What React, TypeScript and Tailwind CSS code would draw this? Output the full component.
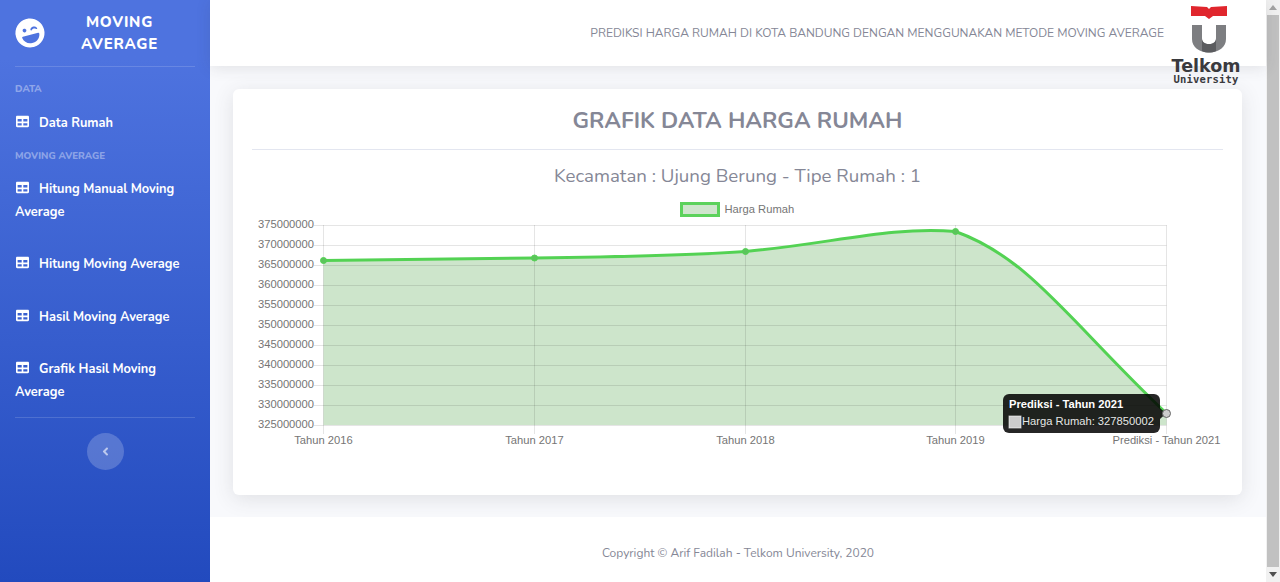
import React from 'react';
import { FaLaughWink, FaTable, FaAngleLeft } from 'react-icons/fa';

const sans = "font-['Nunito','Lato','Noto_Sans',sans-serif]";

const yTicks = [375, 370, 365, 360, 355, 350, 345, 340, 335, 330, 325];
const xTicks = [
  { x: 323.5, label: 'Tahun 2016' },
  { x: 534.5, label: 'Tahun 2017' },
  { x: 745.5, label: 'Tahun 2018' },
  { x: 955.5, label: 'Tahun 2019' },
  { x: 1166.5, label: 'Prediksi - Tahun 2021' },
];
const curve = 'M323.5 260.5 C 400 259.5, 470 259, 534.5 258 C 610 257, 680 256, 745.5 251.5 C 830 244, 890 226, 955.5 231.5 C 1030 258, 1070 322, 1166.5 413.5';

function MenuIcon() {
  return <FaTable size={13} className="inline-block ml-[1px] mr-[10px] align-[-1px]" />;
}

function TelkomMark() {
  return (
    <svg width="36" height="47" viewBox="0 0 36 47" className="block ml-[5px]">
      <path fill="#e0262d" d="M0 0 L16 1 L18 3 L20 1 L36 0 L36 10 L22 10 L18 13 L14 10 L0 10 Z" />
      <path fill="#7d7e81" d="M1 19 H11 V32 C11 36 14 38 18 38 C22 38 25 36 25 32 V19 H35 V33 C35 41 28 46.5 18 46.5 C8 46.5 1 41 1 33 Z" />
      <path fill="#5b5c5f" d="M11 33 C11 36 14 38 18 38 C22 38 25 36 25 33 L25 45 C21 47 15 47 11 45 Z" />
    </svg>
  );
}

function Chart() {
  return (
    <svg width="1009" height="300" viewBox="233 195 1009 300" className="block">
      <g fontFamily="Liberation Sans, sans-serif" fontSize="11.2" fill="#757575">
        {/* legend */}
        <rect x="681.5" y="203.5" width="37" height="12" fill="#cfe5cd" stroke="#5cd25c" strokeWidth="3" />
        <text x="724.5" y="213">Harga Rumah</text>

        {/* area first so the grid shows through */}
        <path d={`${curve} L1166.5 425 L323.5 425 Z`} fill="#cde5cb" />

        {yTicks.map((t, i) => {
          const y = 225.5 + i * 20;
          return (
            <g key={t}>
              <line x1="314" x2="1166.5" y1={y} y2={y} stroke="#000" strokeOpacity="0.1" />
              <text x="314" y={y + 2.5} textAnchor="end">{t}000000</text>
            </g>
          );
        })}
        {xTicks.map(t => (
          <g key={t.label}>
            <line x1={t.x} x2={t.x} y1="225" y2="434" stroke="#000" strokeOpacity="0.1" />
            <text x={t.x} y="444" textAnchor="middle">{t.label}</text>
          </g>
        ))}

        <path d={curve} fill="none" stroke="#53d253" strokeWidth="3" />
        {xTicks.slice(0, 4).map((t, i) => (
          <circle key={t.label} cx={t.x} cy={[260.5, 258, 251.5, 231.5][i]} r="3" fill="#5cc45c" stroke="#53d253" />
        ))}

        {/* tooltip */}
        <path d="M1003 400a6 6 0 0 1 6-6h145a6 6 0 0 1 6 6v27a6 6 0 0 1-6 6h-145a6 6 0 0 1-6-6z" fill="#000" fillOpacity="0.85" />
        <path d="M1160 408 l6 5.5 l-6 5.5 z" fill="#000" fillOpacity="0.85" />
        <circle cx="1166.5" cy="413.5" r="4" fill="#ccc" stroke="#666" strokeWidth="1" />
        <text x="1009" y="408" fill="#fff" fontWeight="700">Prediksi - Tahun 2021</text>
        <rect x="1009" y="416" width="12" height="12" fill="#ccc" stroke="#fff" strokeOpacity="0.6" />
        <text x="1022" y="425" fill="#e6e6e6">Harga Rumah: 327850002</text>
      </g>
    </svg>
  );
}

export default function App() {
  return (
    <div className={`h-[582px] flex overflow-hidden bg-[#f8f9fc] ${sans}`}>
      {/* Sidebar */}
      <aside className="w-[210px] shrink-0 bg-gradient-to-b from-[#4e73df] from-10% to-[#224abe] text-white flex flex-col px-[15px]">
        <div className="h-[67px] flex items-center border-b border-white/15 shrink-0">
          <FaLaughWink size={30} className="-rotate-[15deg] shrink-0" />
          <div className="flex-1 text-center font-extrabold text-[15px] leading-[22px] tracking-[0.75px] pr-[1px]">
            MOVING<br />AVERAGE
          </div>
        </div>
        <p className="mt-4 text-[9.75px] leading-[12px] font-extrabold text-white/40 uppercase">Data</p>
        <p className="mt-[20px] h-[16px] text-[12.8px] leading-[16px] font-bold"><MenuIcon />Data Rumah</p>
        <p className="mt-[19px] text-[9.75px] leading-[12px] font-extrabold text-white/40 uppercase">Moving Average</p>
        <p className="mt-[16px] text-[12.8px] leading-[23px] font-bold"><MenuIcon />Hitung Manual Moving Average</p>
        <p className="mt-[29px] text-[12.8px] leading-[23px] font-bold"><MenuIcon />Hitung Moving Average</p>
        <p className="mt-[30px] text-[12.8px] leading-[23px] font-bold"><MenuIcon />Hasil Moving Average</p>
        <p className="mt-[29px] text-[12.8px] leading-[23px] font-bold"><MenuIcon />Grafik Hasil Moving Average</p>
        <div className="mt-[13px] border-t border-white/15" />
        <button className="mt-[15px] self-center w-[37px] h-[37px] rounded-full bg-white/20 flex items-center justify-center text-white/60">
          <FaAngleLeft size={13} />
        </button>
      </aside>

      {/* Main */}
      <main className="flex-1 min-w-0 flex flex-col">
        <header className="relative h-[66px] shrink-0 bg-white shadow-[0_2px_14px_rgba(58,59,69,0.12)] flex items-center justify-end pr-[102px]">
          <span className="text-[12px] text-[#858796]">PREDIKSI HARGA RUMAH DI KOTA BANDUNG DENGAN MENGGUNAKAN METODE MOVING AVERAGE</span>
          <div className="absolute left-[961px] top-[6px] w-[70px] flex flex-col items-center">
            <TelkomMark />
            <span className="mt-[6px] text-[17.5px] leading-[15px] font-bold font-['DejaVu_Sans',sans-serif] text-[#3a3a3e]">Telkom</span>
            <span className="text-[10.5px] leading-[10px] font-bold tracking-[0.2px] font-['DejaVu_Sans_Mono',monospace] text-[#3a3a3e]">University</span>
          </div>
        </header>

        <div className="flex-1 pl-[23px] pr-[24px] pt-[23px]">
          <section className="h-[406px] bg-white rounded-[6px] shadow-[0_4px_20px_rgba(58,59,69,0.13)] px-[19px]">
            <h1 className="h-[61px] pt-[18px] text-center text-[22.5px] leading-[28px] font-bold text-[#858796] border-b border-[#e3e6f0]">GRAFIK DATA HARGA RUMAH</h1>
            <h2 className="mt-[14px] h-[24px] text-center text-[18.7px] leading-[24px] text-[#858796]">Kecamatan : Ujung Berung - Tipe Rumah : 1</h2>
            <div className="mx-[-19px] mt-[7px]">
              <Chart />
            </div>
          </section>
        </div>

        <footer className="h-[65px] shrink-0 bg-white flex items-center justify-center pt-[6px] text-[12px] text-[#858796]">
          Copyright © Arif Fadilah - Telkom University, 2020
        </footer>
      </main>

      {/* Window scrollbar */}
      <div className="w-[14px] shrink-0 bg-[#f1f1f1] flex flex-col">
        <div className="h-[15px] flex items-center justify-center">
          <svg width="8" height="5" viewBox="0 0 8 5"><path d="M4 0 L8 5 H0 Z" fill="#a3a3a3" /></svg>
        </div>
        <div className="flex-1 mx-[1px] bg-[#c1c1c1]" />
        <div className="h-[15px] flex items-center justify-center">
          <svg width="8" height="5" viewBox="0 0 8 5"><path d="M4 5 L8 0 H0 Z" fill="#505050" /></svg>
        </div>
      </div>
    </div>
  );
}
